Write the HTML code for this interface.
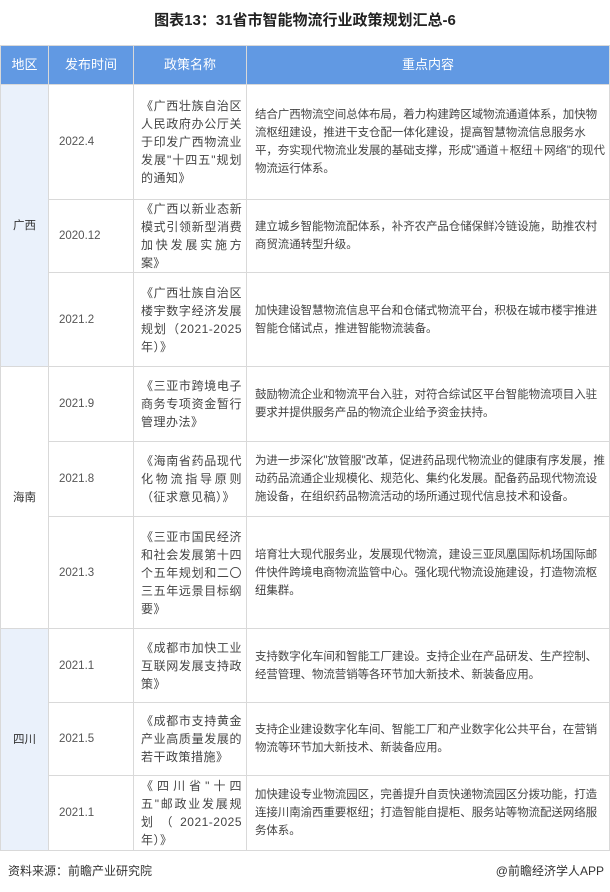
<!DOCTYPE html>
<html><head><meta charset="utf-8"><style>
body{margin:0;width:610px;height:892px;background:#fff;font-family:"Liberation Sans","Noto Sans CJK SC",sans-serif;color:#444;overflow:hidden}
.title{position:absolute;top:9px;left:0;width:610px;text-align:center;font-size:15px;font-weight:bold;color:#222}
table{position:absolute;top:45px;left:0;width:610px;border-collapse:collapse;table-layout:fixed;font-size:11.5px}
td,th{border:1px solid #d9d9d9;padding:0 8px;line-height:18px}
th{background:#6199e3;color:#fff;font-weight:normal;font-size:13px;height:38px}
td.r{text-align:center;padding:0;color:#333}
td.b{background:#eaf1fb}
td.d{padding-left:10px;color:#555}
td.p{padding:0 0 0 7px;font-size:12px}
td.p div{width:101px;text-align:justify;letter-spacing:0.5px}
td.c{padding-left:8px;padding-right:2px;letter-spacing:-0.1px}
.foot{position:absolute;top:862px;left:8px;font-size:12px;color:#333}
.foot2{position:absolute;top:862px;right:6px;font-size:12px;color:#333}
</style></head><body>
<div class="title">图表13：31省市智能物流行业政策规划汇总-6</div>
<table>
<colgroup><col style="width:48px"><col style="width:85px"><col style="width:113px"><col></colgroup>
<tr><th>地区</th><th>发布时间</th><th>政策名称</th><th>重点内容</th></tr>
<tr style="height:115px"><td class="r b" rowspan="3">广西</td><td class="d">2022.4</td><td class="p"><div>《广西壮族自治区人民政府办公厅关于印发广西物流业发展"十四五"规划的通知》</div></td><td class="c">结合广西物流空间总体布局，着力构建跨区域物流通道体系，加快物流枢纽建设，推进干支仓配一体化建设，提高智慧物流信息服务水平，夯实现代物流业发展的基础支撑，形成"通道＋枢纽＋网络"的现代物流运行体系。</td></tr>
<tr style="height:70px"><td class="d">2020.12</td><td class="p"><div style="letter-spacing:0.2px">《广西以新业态新模式引领新型消费加快发展实施方案》</div></td><td class="c">建立城乡智能物流配体系，补齐农产品仓储保鲜冷链设施，助推农村商贸流通转型升级。</td></tr>
<tr style="height:94px"><td class="d">2021.2</td><td class="p"><div>《广西壮族自治区楼宇数字经济发展规划（2021-2025年）》</div></td><td class="c">加快建设智慧物流信息平台和仓储式物流平台，积极在城市楼宇推进智能仓储试点，推进智能物流装备。</td></tr>
<tr style="height:75px"><td class="r" rowspan="3">海南</td><td class="d">2021.9</td><td class="p"><div>《三亚市跨境电子商务专项资金暂行管理办法》</div></td><td class="c">鼓励物流企业和物流平台入驻，对符合综试区平台智能物流项目入驻要求并提供服务产品的物流企业给予资金扶持。</td></tr>
<tr style="height:75px"><td class="d">2021.8</td><td class="p"><div>《海南省药品现代化物流指导原则（征求意见稿）》</div></td><td class="c">为进一步深化"放管服"改革，促进药品现代物流业的健康有序发展，推动药品流通企业规模化、规范化、集约化发展。配备药品现代物流设施设备，在组织药品物流活动的场所通过现代信息技术和设备。</td></tr>
<tr style="height:112px"><td class="d">2021.3</td><td class="p"><div>《三亚市国民经济和社会发展第十四个五年规划和二〇三五年远景目标纲要》</div></td><td class="c">培育壮大现代服务业，发展现代物流，建设三亚凤凰国际机场国际邮件快件跨境电商物流监管中心。强化现代物流设施建设，打造物流枢纽集群。</td></tr>
<tr style="height:74px"><td class="r b" rowspan="3">四川</td><td class="d">2021.1</td><td class="p"><div>《成都市加快工业互联网发展支持政策》</div></td><td class="c">支持数字化车间和智能工厂建设。支持企业在产品研发、生产控制、经营管理、物流营销等各环节加大新技术、新装备应用。</td></tr>
<tr style="height:73px"><td class="d">2021.5</td><td class="p"><div>《成都市支持黄金产业高质量发展的若干政策措施》</div></td><td class="c">支持企业建设数字化车间、智能工厂和产业数字化公共平台，在营销物流等环节加大新技术、新装备应用。</td></tr>
<tr style="height:75px"><td class="d">2021.1</td><td class="p"><div>《四川省"十四五"邮政业发展规划（2021-2025年）》</div></td><td class="c">加快建设专业物流园区，完善提升自贡快递物流园区分拨功能，打造连接川南渝西重要枢纽；打造智能自提柜、服务站等物流配送网络服务体系。</td></tr>
</table>
<div class="foot">资料来源：前瞻产业研究院</div>
<div class="foot2">@前瞻经济学人APP</div>
</body></html>
